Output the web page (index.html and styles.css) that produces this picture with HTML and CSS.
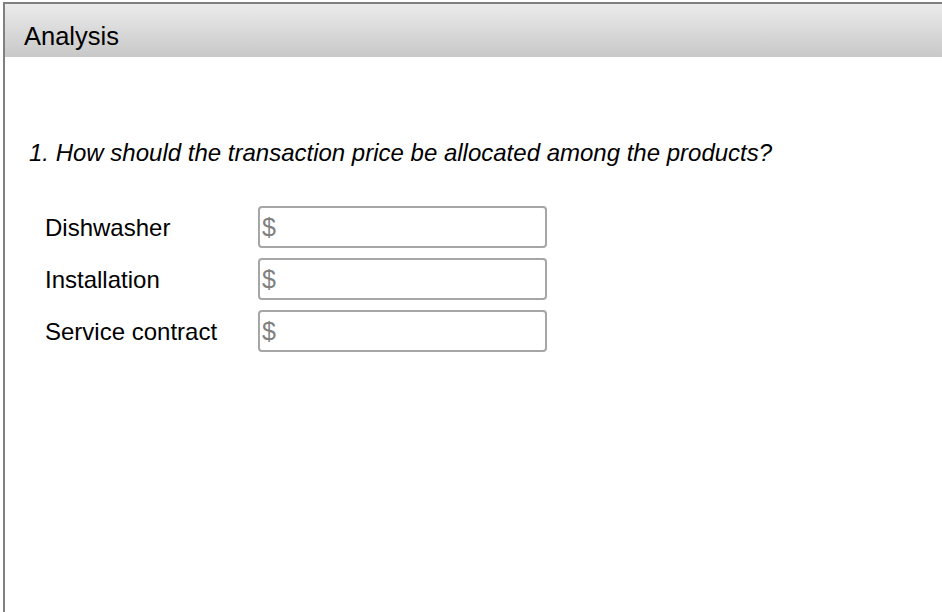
FILE: index.html
```html
<!DOCTYPE html>
<html lang="en">
<head>
<meta charset="utf-8">
<title>Analysis</title>
<link rel="stylesheet" href="styles.css">
</head>
<body>
<div class="frame">
  <div class="header">Analysis</div>
  <div class="content">
    <p class="question">1. How should the transaction price be allocated among the products?</p>
    <div class="rows">
      <label class="label">Dishwasher</label>
      <div class="field"><span class="dollar">$</span></div>
      <label class="label">Installation</label>
      <div class="field"><span class="dollar">$</span></div>
      <label class="label">Service contract</label>
      <div class="field"><span class="dollar">$</span></div>
    </div>
  </div>
</div>
</body>
</html>
```

FILE: styles.css
```css
html, body {
  margin: 0;
  padding: 0;
  background: #ffffff;
  overflow: hidden;
}

body {
  font-family: "Liberation Sans", Arial, Helvetica, sans-serif;
  color: #000;
}

.frame {
  margin: 2px 0 0 3px;
  border-top: 2px solid #808080;
  border-left: 2px solid #808080;
  height: 620px;
  box-sizing: border-box;
}

.header {
  box-sizing: border-box;
  height: 53px;
  padding: 17px 0 0 19px;
  font-size: 25.5px;
  line-height: 30px;
  background: linear-gradient(to bottom, #ebebeb 0%, #c8c8c8 100%);
}

.content {
  padding: 81px 0 0 24px;
}

.question {
  margin: 0;
  font-size: 24px;
  font-style: italic;
  line-height: 30px;
}

.rows {
  display: grid;
  grid-template-columns: 213px 289px;
  row-gap: 10px;
  margin: 38px 0 0 16px;
}

.label {
  font-size: 24px;
  line-height: 42px;
  padding-top: 1px;
  height: 42px;
  box-sizing: border-box;
}

.field {
  box-sizing: border-box;
  height: 42px;
  border: 2px solid #a6a6a6;
  border-radius: 4px;
  padding-left: 2px;
  display: flex;
  align-items: center;
}

.dollar {
  font-size: 25px;
  color: #808080;
  line-height: 1;
}
```
